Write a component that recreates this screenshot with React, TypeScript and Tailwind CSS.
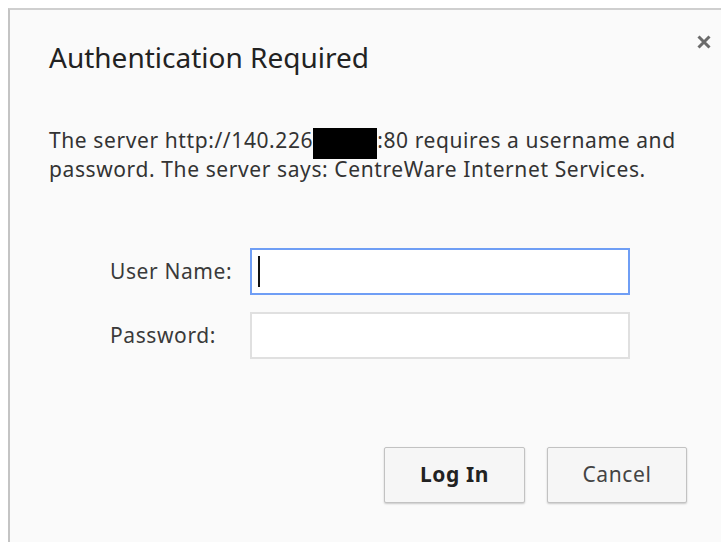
import { useState } from "react";

function Field({
  label,
  type = "text",
  focused = false,
}: {
  label: string;
  type?: string;
  focused?: boolean;
}) {
  const [value, setValue] = useState("");
  return (
    <div className="flex items-center">
      <label className="w-[140px] text-[21px] tracking-[0.6px] text-[#3a3a3a]">{label}</label>
      <div
        className={
          focused
            ? "relative h-[47px] w-[380px] border-2 border-[#6f9ef5] bg-white"
            : "relative h-[47px] w-[380px] border-2 border-[#e0e0e0] bg-white"
        }
      >
        <input
          type={type}
          value={value}
          onChange={(e) => setValue(e.target.value)}
          className="h-full w-full bg-transparent px-2 text-[20px] outline-none"
        />
        {focused && (
          <span className="absolute left-[6px] top-[6px] h-[31px] w-[2px] bg-[#111]" />
        )}
      </div>
    </div>
  );
}

export default function App() {
  return (
    <div className="h-[542px] w-[721px] overflow-hidden bg-white pl-2 pt-2 font-['Noto_Sans',sans-serif] text-[#333]">
      <div className="flex h-[600px] flex-col border-l-2 border-t-2 border-l-[#c4c4c4] border-t-[#cfcfcf] bg-[#fafafa] pl-[39px] pr-[34px]">
        <div className="-mr-[24px] flex items-start justify-between pt-[29px]">
          <h1 className="text-[28px] leading-[36px] text-[#222]">Authentication Required</h1>
          <button className="-mt-[4px] text-[#6b6b6b]" aria-label="Close">
            <svg width="14" height="14" viewBox="0 0 14 14">
              <path d="M1.5 1.5 L12.5 12.5 M12.5 1.5 L1.5 12.5" stroke="currentColor" strokeWidth="3" />
            </svg>
          </button>
        </div>
        <p className="mt-[42px] w-[640px] text-[21px] leading-[29px] tracking-[0.6px]">
          The server http://140.226
          <span className="inline-block h-[31px] w-[64px] translate-y-[11px] bg-black align-baseline" />
          :80 requires a username and password. The server says: CentreWare Internet Services.
        </p>
        <div className="mt-[64px] flex flex-col gap-[17px] pl-[61px]">
          <Field label="User Name:" focused />
          <Field label="Password:" type="password" />
        </div>
        <div className="mt-[88px] flex justify-end gap-[22px]">
          <button className="h-[56px] w-[141px] rounded-[2px] border border-[#c2c2c2] bg-[#f6f6f6] text-[21px] font-bold tracking-[0.6px] text-[#222] shadow-[0_1px_2px_rgba(0,0,0,0.2)]">
            Log In
          </button>
          <button className="h-[56px] w-[140px] rounded-[2px] border border-[#c2c2c2] bg-[#f6f6f6] text-[21px] tracking-[0.6px] text-[#444] shadow-[0_1px_2px_rgba(0,0,0,0.2)]">
            Cancel
          </button>
        </div>
      </div>
    </div>
  );
}
